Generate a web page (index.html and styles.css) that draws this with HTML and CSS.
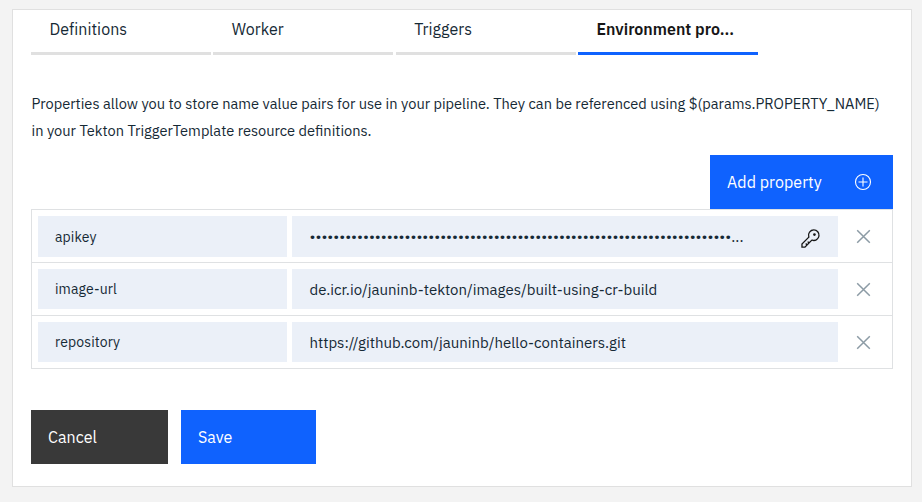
FILE: index.html
```html
<!DOCTYPE html>
<html lang="en">
<head>
<meta charset="utf-8">
<title>Environment properties</title>
<link rel="stylesheet" href="styles.css">
</head>
<body>
<main class="card">
  <nav class="tabs">
    <a class="tab">Definitions</a>
    <a class="tab">Worker</a>
    <a class="tab">Triggers</a>
    <a class="tab active">Environment pro...</a>
  </nav>
  <p class="intro">Properties allow you to store name value pairs for use in your pipeline. They can be referenced using $(params.PROPERTY_NAME)<br>in your Tekton TriggerTemplate resource definitions.</p>
  <div class="toolbar">
    <button class="btn add"><span>Add property</span>
      <svg width="18" height="18" viewBox="0 0 18 18" fill="none" stroke="currentColor"><circle cx="9" cy="9" r="7.5" stroke-width="1.1"/><path d="M9 4.5v9M4.5 9h9" stroke-width="1.1"/></svg>
    </button>
  </div>
  <section class="table">
    <div class="row first">
      <div class="cell name">apikey</div>
      <div class="cell value"><span>•••••••••••••••••••••••••••••••••••••••••••••••••••••••••••••••••••••••...</span>
        <svg class="key" width="21" height="21" viewBox="0 0 32 32"><path fill="currentColor" d="M21 2a8.998 8.998 0 0 0-8.612 11.612L2 24v6h6l10.388-10.388A9 9 0 1 0 21 2Zm0 16a7.013 7.013 0 0 1-2.032-.302l-1.147-.348-.847.847-3.181 3.181L12.414 20 11 21.414l1.379 1.379-1.586 1.586L9.414 23 8 24.414l1.379 1.379L7.172 28H4v-3.172l9.802-9.802.848-.847-.348-1.147A7 7 0 1 1 21 18Z"/><circle cx="22" cy="10" r="2" fill="currentColor"/></svg>
      </div>
      <svg class="close" width="15" height="15" viewBox="0 0 15 15"><path d="M1.2 1.2l12.6 12.6M13.8 1.2L1.2 13.8"/></svg>
    </div>
    <div class="row">
      <div class="cell name">image-url</div>
      <div class="cell value">de.icr.io/jauninb-tekton/images/built-using-cr-build</div>
      <svg class="close" width="15" height="15" viewBox="0 0 15 15"><path d="M1.2 1.2l12.6 12.6M13.8 1.2L1.2 13.8"/></svg>
    </div>
    <div class="row">
      <div class="cell name">repository</div>
      <div class="cell value">https://github.com/jauninb/hello-containers.git</div>
      <svg class="close" width="15" height="15" viewBox="0 0 15 15"><path d="M1.2 1.2l12.6 12.6M13.8 1.2L1.2 13.8"/></svg>
    </div>
  </section>
  <div class="actions">
    <button class="btn cancel">Cancel</button>
    <button class="btn save">Save</button>
  </div>
</main>
</body>
</html>
```
FILE: styles.css
```css
* { box-sizing: border-box; }
body {
  margin: 0;
  height: 502px;
  padding: 9px 10px 15px 12px;
  background: #f3f3f3;
  color: #152935;
  font: 15px/20px "IBM Plex Sans", Roboto, sans-serif;
}
.card {
  width: 900px;
  height: 478px;
  padding: 0 18px;
  background: #fff;
  border: 1px solid #e0e0e0;
}
.tabs { display: flex; gap: 2.33px; height: 45px; }
.tab {
  width: 180px;
  padding: 9px 0 0 18.5px;
  border-bottom: 3px solid #e0e0e0;
  font-size: 16px;
  letter-spacing: 0.03px;
  white-space: nowrap;
}
.active { border-color: #0f62fe; color: #161616; font-weight: 600; letter-spacing: 0; }
.intro { margin: 35px 0 0; height: 54px; padding-left: 0.5px; font-size: 14.62px; line-height: 27px; white-space: nowrap; }
.toolbar { display: flex; justify-content: flex-end; margin-top: 11px; }
.btn {
  height: 54px;
  padding: 0 17px;
  border: 0;
  color: #fff;
  font: 16px/20px "IBM Plex Sans", Roboto, sans-serif;
  letter-spacing: 0.05px;
  text-align: left;
}
.add {
  display: flex;
  align-items: center;
  justify-content: space-between;
  width: 183px;
  padding-right: 21px;
  background: #0f62fe;
}
.table { border: 1px solid #dfe1e3; }
.row {
  display: grid;
  grid-template-columns: 249px 546px 1fr;
  column-gap: 5px;
  height: 53px;
  padding: 6px 0 6px 6px;
  border-bottom: 1px solid #dfe1e3;
}
.row:last-child { height: 52px; border-bottom: 0; }
.first { padding-bottom: 5px; }
.cell { display: flex; align-items: center; padding: 0 17px; background: #ebf0f8; white-space: nowrap; }
.name { font-size: 14px; letter-spacing: 0.12px; }
.value { justify-content: space-between; padding: 1px 17px 0 17.5px; }
.key { margin-top: 3px; color: #161616; }
.close { align-self: center; margin-left: 13px; fill: none; stroke: #8c9ba5; stroke-width: 1.5; }
.actions { display: flex; gap: 13px; margin-top: 41px; }
.cancel { width: 137px; background: #393939; }
.save { width: 135px; background: #0f62fe; }
```
